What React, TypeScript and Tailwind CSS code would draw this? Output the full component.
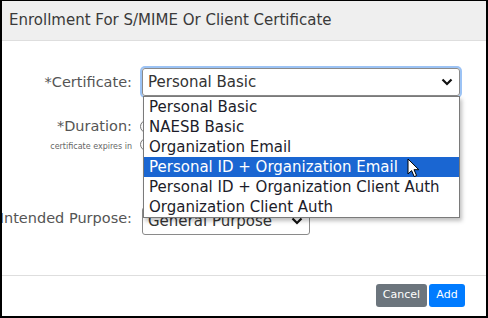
import React from 'react';

const options = [
  'Personal Basic',
  'NAESB Basic',
  'Organization Email',
  'Personal ID + Organization Email',
  'Personal ID + Organization Client Auth',
  'Organization Client Auth',
];

const Chevron = () => (
  <svg width="12" height="8" viewBox="0 0 12 8" className="shrink-0">
    <path d="M1.5 1.5 L6 6 L10.5 1.5" fill="none" stroke="#111" strokeWidth="2.2" />
  </svg>
);

const Pointer = () => (
  <svg width="14" height="21" viewBox="0 0 14 21" className="absolute left-[263px] top-[61px]">
    <path
      d="M1 1 L1 16 L4.6 12.6 L7.2 18.6 L9.6 17.6 L7 11.7 L11.8 11.7 Z"
      fill="#fff"
      stroke="#000"
      strokeWidth="1"
      strokeLinejoin="round"
    />
  </svg>
);

export default function App() {
  return (
    <div
      className="w-[488px] h-[318px] overflow-hidden bg-white border-t border-l-2 border-r-2 border-b-2 border-black flex flex-col"
      style={{ fontFamily: '"DejaVu Sans", sans-serif' }}
    >
      <div className="h-[40px] shrink-0 bg-[#efefef] border-b border-[#dedede] flex items-center pl-[7px] text-[15px] text-[#3a3a3a]">
        Enrollment For S/MIME Or Client Certificate
      </div>

      <div className="flex-1 relative pt-[27px]">
        <div className="grid grid-cols-[130px_1fr] gap-x-[10px] text-[14.5px] text-[#555]">
          <div className="flex justify-end pt-[4px] whitespace-nowrap">*Certificate:</div>
          <div className="relative text-[15px]">
            <div className="w-[318px] h-[28px] rounded-[3px] border border-[#8a8a8a] shadow-[0_0_0_2px_#9cc3f5] flex items-center justify-between pl-[5px] pr-[6px] text-[#333]">
              <span>Personal Basic</span>
              <Chevron />
            </div>
            <div className="absolute left-[1px] top-[28px] w-[317px] border border-[#7a7a7a] bg-white shadow-[2px_3px_4px_rgba(0,0,0,0.25)] z-10 text-[#1c1c2a]">
              {options.map((o, i) => (
                <div
                  key={o}
                  className={`h-[20px] flex items-center pl-[5px] ${
                    i === 3 ? 'bg-[#1a66d2] text-white' : ''
                  }`}
                >
                  {o}
                </div>
              ))}
              <Pointer />
            </div>
          </div>

          <div className="flex flex-col items-end mt-[20px] whitespace-nowrap">
            <span>*Duration:</span>
            <span className="text-[8px] text-[#666] mt-[3px]">certificate expires in</span>
          </div>
          <div className="mt-[24px] flex flex-col gap-[5px] -ml-[2px]">
            <div className="w-[13px] h-[13px] rounded-full border border-[#777]" />
            <div className="w-[13px] h-[13px] rounded-full border border-[#777]" />
          </div>

          <div className="flex justify-end mt-[52px] pt-[3px] whitespace-nowrap">*Intended Purpose:</div>
          <div className="mt-[54px] text-[15px]">
            <div className="w-[168px] h-[28px] rounded-[3px] border border-[#8a8a8a] flex items-center justify-between pl-[5px] pr-[6px] text-[#333]">
              <span>General Purpose</span>
              <Chevron />
            </div>
          </div>
        </div>
      </div>

      <div className="h-[41px] shrink-0 border-t border-[#dedede] flex items-center justify-end gap-[2px] pr-[21px] pb-[1px]">
        <button className="h-[23px] w-[51px] rounded-[3px] bg-[#6c757d] text-white text-[11px]">Cancel</button>
        <button className="h-[23px] w-[36px] rounded-[3px] bg-[#007bff] text-white text-[11px]">Add</button>
      </div>
    </div>
  );
}
